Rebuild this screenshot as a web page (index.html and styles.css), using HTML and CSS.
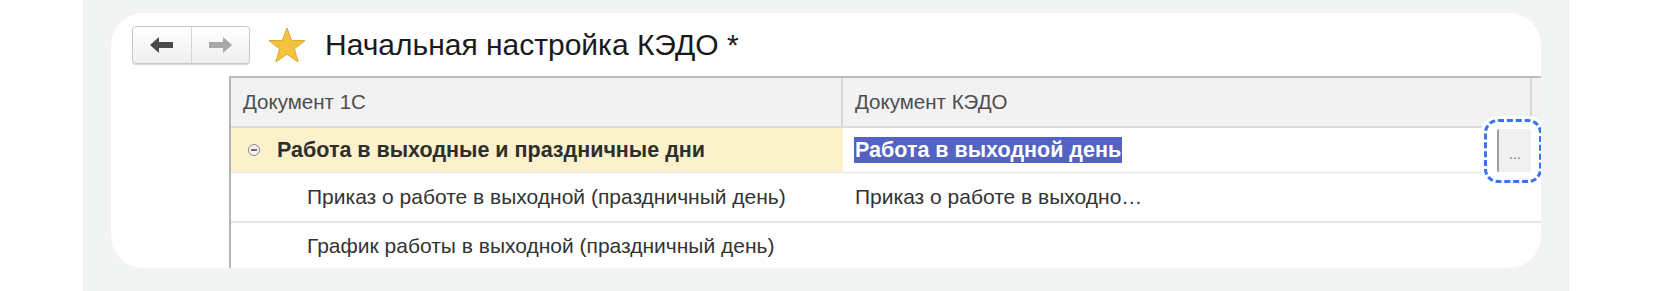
FILE: index.html
```html
<html>
<head>
<meta http-equiv="Content-Type" content="text/html; charset=UTF-8" />
<title>Начальная настройка КЭДО</title>
<link rel="stylesheet" href="styles.css">
</head>
<body>

<div class="band">
  <div class="card">
    <div class="toolbar">
      <div class="navgroup">
        <div class="nav">
          <svg width="24" height="16" viewBox="0 0 24 16"><path d="M0 8 L9 0 L9 5 L23 5 L23 11 L9 11 L9 16 Z" fill="#4a4a4a"/></svg>
        </div>
        <div class="nav">
          <svg width="24" height="16" viewBox="0 0 24 16"><path d="M24 8 L15 0 L15 5 L1 5 L1 11 L15 11 L15 16 Z" fill="#a9a9a9"/></svg>
        </div>
      </div>
      <svg class="star" width="38" height="36" viewBox="0 0 38 36"><path d="M19 1 L23.6 13.4 L37 13.6 L26.4 21.8 L30.2 35 L19 27.2 L7.8 35 L11.6 21.8 L1 13.6 L14.4 13.4 Z" fill="#f4c23c" stroke="#d8a72a" stroke-width="1"/></svg>
      <h1 class="title">Начальная настройка КЭДО *</h1>
    </div>

    <div class="grid">
      <div class="row head">
        <div class="cell c1">Документ 1С</div>
        <div class="cell c2">Документ КЭДО</div>
        <div class="cell c3"></div>
      </div>
      <div class="row group">
        <div class="cell c1"><span class="toggle"></span><b>Работа в выходные и праздничные дни</b></div>
        <div class="cell c2"><span class="sel">Работа в выходной день</span></div>
        <div class="cell c3"></div>
      </div>
      <div class="row">
        <div class="cell c1 sub">Приказ о работе в выходной (праздничный день)</div>
        <div class="cell c2">Приказ о работе в выходно…</div>
        <div class="cell c3"></div>
      </div>
      <div class="row last">
        <div class="cell c1 sub">График работы в выходной (праздничный день)</div>
        <div class="cell c2"></div>
        <div class="cell c3"></div>
      </div>
    </div>

    <div class="callout"><div class="pick">...</div></div>
  </div>
</div>

</body>
</html>
```

FILE: styles.css
```css
body {
	margin: 0;
	padding: 0;
	background: #FFF;
	font-family: "Liberation Sans", Arial, sans-serif;
	color: #333;
}

.band {
	margin-left: 83px;
	width: 1486px;
	height: 291px;
	background: #F2F3F3;
	padding-top: 13px;
	box-sizing: border-box;
}

.card {
	position: relative;
	margin: 0 28px;
	height: 255px;
	background: #FFF;
	border-radius: 32px;
	overflow: hidden;
}

.toolbar {
	display: flex;
	align-items: center;
	padding: 13px 0 0 21px;
	height: 38px;
}

.navgroup {
	display: flex;
	width: 118px;
	height: 38px;
	box-sizing: border-box;
	border: 1px solid #C8C8C8;
	border-radius: 4px;
	background: linear-gradient(#FFF, #EFEFEF);
	box-shadow: 0 1px 1px #D6D6D6;
}

.nav {
	flex: 1;
	display: flex;
	align-items: center;
	justify-content: center;
}

.nav + .nav {
	border-left: 1px solid #D4D4D4;
}

.star {
	margin-left: 18px;
}

.title {
	margin: 0 0 0 19px;
	font-size: 30px;
	font-weight: normal;
	color: #1A1A1A;
	line-height: 38px;
}

.grid {
	margin: 12px 0 0 118px;
	border-top: 2px solid #BDBDBD;
	border-left: 2px solid #B5B5B5;
}

.row {
	display: grid;
	grid-template-columns: 612px 689px 1fr;
	height: 44px;
	border-bottom: 1px solid #E6E6E6;
	font-size: 21px;
}

.cell {
	display: flex;
	align-items: center;
	padding-left: 12px;
	white-space: nowrap;
}

.head {
	height: 48px;
	background: #F2F2F2;
	border-bottom: 2px solid #DCDCDC;
	color: #4D4D4D;
	font-size: 20.5px;
}

.head .c1, .head .c2 {
	border-right: 2px solid #D6D6D6;
}

.group {
	height: 44px;
	font-size: 21.5px;
}

.group .c1 {
	background: #FBF1CB;
	padding-left: 17px;
	color: #2E2E2E;
}

.toggle {
	display: inline-block;
	position: relative;
	width: 10px;
	height: 10px;
	border: 1px solid #8A8A8A;
	border-radius: 50%;
	background: #F4F4F4;
	margin-right: 17px;
}

.toggle:after {
	content: "";
	position: absolute;
	left: 2px;
	top: 4px;
	width: 6px;
	height: 2px;
	background: #6A6A6A;
}

.sel {
	background: #5462C1;
	color: #FFF;
	font-weight: bold;
	line-height: 26px;
	padding: 0 1px;
	margin-left: -1px;
}

.row:nth-child(3) {
	height: 48px;
	border-bottom: 2px solid #E6E6E6;
}

.last {
	height: 45px;
	border-bottom: none;
}

.sub {
	padding-left: 76px;
}

.callout {
	position: absolute;
	left: 1373px;
	top: 106px;
	width: 58px;
	height: 64px;
	box-sizing: border-box;
	border: 3px dashed #3A72F0;
	border-radius: 14px;
	background: #FFF;
	box-shadow: 0 0 0 3px #FFF;
	padding: 7px 8px 8px 10px;
}

.pick {
	height: 100%;
	background: #F0F0F0;
	border-left: 2px solid #9C9C9C;
	border-radius: 2px;
	font-size: 14px;
	color: #777;
	text-align: center;
	line-height: 50px;
}
```
